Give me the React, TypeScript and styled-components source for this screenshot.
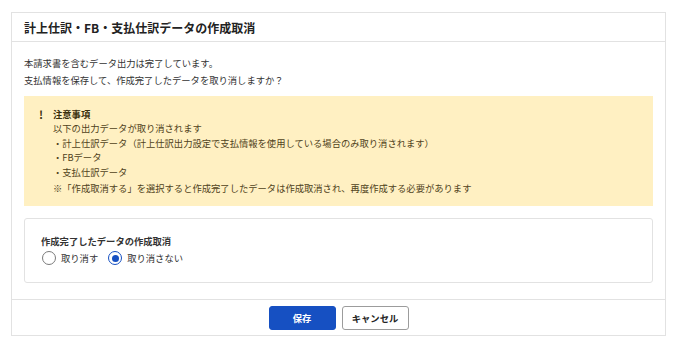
import React, { useState } from "react";
import styled, { createGlobalStyle } from "styled-components";

const colors = {
    text: "#333",
    title: "#222",
    border: "#e2e2e2",
    noticeBg: "#fff0c2",
    noticeText: "#4f4220",
    noticeTitle: "#3a2f0d",
    primary: "#1650c2",
    radioOff: "#7a7a7a",
};

const GlobalStyle = createGlobalStyle`
    body {
        margin: 0;
        background: #fff;
        font-family: "Noto Sans CJK JP", "Noto Sans", sans-serif;
        color: ${colors.text};
    }
`;

const Page = styled.div`
    padding: 12px 9px 10px 11px;
`;

const Panel = styled.section`
    width: 655px;
    box-sizing: border-box;
    border: 1px solid ${colors.border};
    background: #fff;
`;

const Header = styled.header`
    height: 28px;
    display: flex;
    align-items: center;
    padding: 0 12px;
    border-bottom: 1px solid ${colors.border};
`;

const Heading = styled.h1`
    margin: 0;
    font-size: 12px;
    font-weight: 700;
    color: ${colors.title};
`;

const Body = styled.div`
    padding: 13px 12px 16px;
    display: flex;
    flex-direction: column;
`;

const Lead = styled.p`
    margin: 0 0 8px;
    font-size: 9.3px;
    line-height: 16.5px;
`;

const Notice = styled.div`
    display: flex;
    background: ${colors.noticeBg};
    padding: 11px 14px 11px 15px;
    color: ${colors.noticeText};
    font-size: 9.3px;
    line-height: 14.4px;
`;

const NoticeIcon = styled.span`
    width: 14px;
    flex: none;
    font-weight: 700;
    font-size: 11px;
    color: ${colors.noticeTitle};
`;

const NoticeContent = styled.div`
    display: flex;
    flex-direction: column;
`;

const NoticeTitle = styled.div`
    font-weight: 700;
    color: ${colors.noticeTitle};
`;

const NoticeLine = styled.div<{ $note?: boolean }>`
    margin-top: ${(p) => (p.$note ? "2px" : "0")};
`;

const FormCard = styled.div`
    margin-top: 12px;
    border: 1px solid ${colors.border};
    border-radius: 3px;
    padding: 14px 16px 15px;
`;

const FieldLabel = styled.div`
    font-size: 9.3px;
    line-height: 16px;
    font-weight: 700;
    color: ${colors.text};
`;

const RadioRow = styled.div`
    display: flex;
    align-items: center;
    gap: 9px;
    height: 18px;
`;

const RadioOption = styled.label`
    display: flex;
    align-items: center;
    gap: 5px;
    font-size: 9.3px;
    cursor: pointer;
`;

const RadioMark = styled.span<{ $checked: boolean }>`
    width: 14px;
    height: 14px;
    margin-left: 1px;
    box-sizing: border-box;
    border-radius: 50%;
    border: 1.5px solid ${(p) => (p.$checked ? colors.primary : colors.radioOff)};
    display: flex;
    align-items: center;
    justify-content: center;
    &::after {
        content: "";
        width: 7px;
        height: 7px;
        border-radius: 50%;
        background: ${(p) => (p.$checked ? colors.primary : "transparent")};
    }
`;

const Footer = styled.footer`
    border-top: 1px solid ${colors.border};
    padding: 6px 0 5px;
    display: flex;
    justify-content: center;
    gap: 6px;
`;

const Button = styled.button<{ $primary?: boolean }>`
    width: 67px;
    height: 24px;
    box-sizing: border-box;
    border-radius: 3px;
    border: 1px solid ${(p) => (p.$primary ? colors.primary : "#9c9c9c")};
    background: ${(p) => (p.$primary ? colors.primary : "#fff")};
    color: ${(p) => (p.$primary ? "#fff" : colors.title)};
    font-family: inherit;
    font-size: 9.3px;
    font-weight: 700;
    padding: 0;
    cursor: pointer;
`;

const options = [
    { value: "cancel", label: "取り消す" },
    { value: "keep", label: "取り消さない" },
];

const App: React.FC = () => {
    const [choice, setChoice] = useState("keep");

    return (
        <Page>
            <GlobalStyle />
            <Panel>
                <Header>
                    <Heading>計上仕訳・FB・支払仕訳データの作成取消</Heading>
                </Header>
                <Body>
                    <Lead>
                        本請求書を含むデータ出力は完了しています。
                        <br />
                        支払情報を保存して、作成完了したデータを取り消しますか？
                    </Lead>
                    <Notice>
                        <NoticeIcon>!</NoticeIcon>
                        <NoticeContent>
                            <NoticeTitle>注意事項</NoticeTitle>
                            <NoticeLine>以下の出力データが取り消されます</NoticeLine>
                            <NoticeLine>・計上仕訳データ（計上仕訳出力設定で支払情報を使用している場合のみ取り消されます）</NoticeLine>
                            <NoticeLine>・FBデータ</NoticeLine>
                            <NoticeLine>・支払仕訳データ</NoticeLine>
                            <NoticeLine $note>※「作成取消する」を選択すると作成完了したデータは作成取消され、再度作成する必要があります</NoticeLine>
                        </NoticeContent>
                    </Notice>
                    <FormCard>
                        <FieldLabel>作成完了したデータの作成取消</FieldLabel>
                        <RadioRow>
                            {options.map((o) => (
                                <RadioOption key={o.value} onClick={() => setChoice(o.value)}>
                                    <RadioMark $checked={choice === o.value} />
                                    {o.label}
                                </RadioOption>
                            ))}
                        </RadioRow>
                    </FormCard>
                </Body>
                <Footer>
                    <Button $primary>保存</Button>
                    <Button>キャンセル</Button>
                </Footer>
            </Panel>
        </Page>
    );
};

export default App;
